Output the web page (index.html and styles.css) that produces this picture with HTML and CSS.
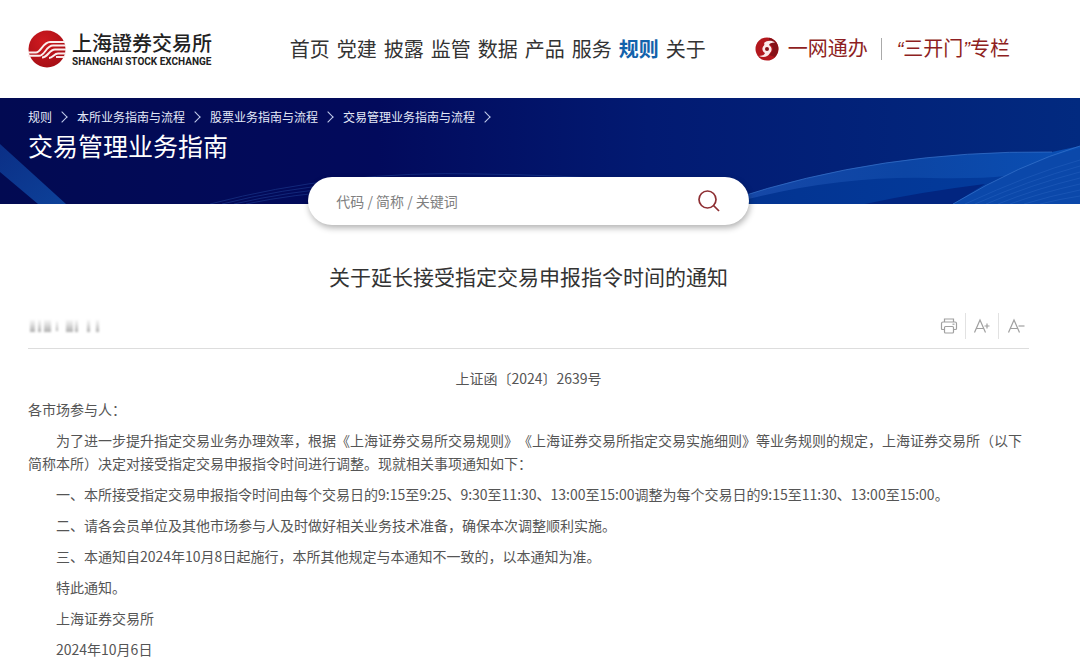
FILE: index.html
```html
<!DOCTYPE html>
<html lang="zh-CN">
<head>
  <meta charset="UTF-8">
  <meta name="viewport" content="width=device-width, initial-scale=1">
  <title>关于延长接受指定交易申报指令时间的通知</title>
  <link rel="stylesheet" href="styles.css">
</head>
<body>
  <!-- Header: logo, main nav, portal links -->
  <header class="site-header">
    <a class="logo" href="#">
      <svg class="logo-mark" viewBox="0 0 38 38" aria-hidden="true">
        <defs>
          <radialGradient id="logoRed" cx="0.4" cy="0.3" r="0.8">
            <stop offset="0" stop-color="#cf1a20"/>
            <stop offset="1" stop-color="#a30d14"/>
          </radialGradient>
        </defs>
        <circle cx="19" cy="19" r="18.5" fill="url(#logoRed)"/>
        <g fill="none" stroke="#fbeeee" stroke-width="1.9">
          <path d="M0 22.500 H8 C13 22.500 15 12 22 12 H37"/>
          <path d="M0 25.800 H11 C17 25.800 18 15.500 25 15.500 H38"/>
          <path d="M14 27.500 C20 27.500 21 19.500 27 19.500 H38"/>
          <path d="M21 28 C25 28 26 23.500 30 23.500 H38"/>
          <path d="M28 27 H37"/>
        </g>
      </svg>
      <span class="logo-text">
        <span class="logo-cn" lang="zh-TW">上海證券交易所</span>
        <span class="logo-en">SHANGHAI STOCK EXCHANGE</span>
      </span>
    </a>

    <nav class="main-nav">
      <a href="#">首页</a>
      <a href="#">党建</a>
      <a href="#">披露</a>
      <a href="#">监管</a>
      <a href="#">数据</a>
      <a href="#">产品</a>
      <a href="#">服务</a>
      <a href="#" class="active">规则</a>
      <a href="#">关于</a>
    </nav>

    <div class="portal">
      <a class="portal-link" href="#">
        <svg class="portal-icon" viewBox="0 0 24 24" aria-hidden="true">
          <circle cx="12" cy="12" r="11.500" fill="#b3171d"/>
          <path d="M14 .7 A11.500 11.500 0 0 1 20 20 L14 18 C19 14 19 9 14 7 Z" fill="#861117"/>
          <path d="M9 6 C12 3 17 3 20 5.500 C16 5.500 14.500 6.500 14 8 C17 10 17.500 13 15 16 C13 19.500 9 21.500 4 19 C8 19 9.500 17.500 10 16 C7 14 6.500 11 9 8.500 C9.500 7.500 9.500 7 9 6 Z" fill="#fbeaea"/>
          <circle cx="12" cy="12" r="2" fill="#861117"/>
        </svg>
        <span>一网通办</span>
      </a>
      <a class="portal-link portal-column" href="#"><span><i>“</i>三开门<i>”</i>专栏</span></a>
    </div>
  </header>

  <!-- Banner -->
  <section class="banner">
    <svg class="banner-art" viewBox="0 0 1080 106" preserveAspectRatio="none" aria-hidden="true">
      <defs>
        <linearGradient id="wave" x1="0" y1="0" x2="1" y2="0">
          <stop offset="0" stop-color="#1748a8"/>
          <stop offset="0.5" stop-color="#0c45a4"/>
          <stop offset="1" stop-color="#0a4fb4"/>
        </linearGradient>
        <linearGradient id="waveInner" x1="0" y1="0" x2="1" y2="0">
          <stop offset="0" stop-color="#033390"/>
          <stop offset="1" stop-color="#033b9c"/>
        </linearGradient>
        <linearGradient id="beam" x1="0" y1="0" x2="1" y2="1">
          <stop offset="0" stop-color="#0b2f86"/>
          <stop offset="1" stop-color="#0d4199"/>
        </linearGradient>
      </defs>
      <path d="M0 46 L66 106 H38 L0 74 Z" fill="url(#beam)"/>
      <g fill="none" stroke="#2950a6" stroke-width="0.6" opacity="0.7">
        <path d="M210 106 Q340 72 480 76 Q560 77 620 82"/>
        <path d="M222 106 Q340 76 480 83"/>
        <path d="M234 106 Q340 81 480 87"/>
        <path d="M246 106 Q340 86 480 91"/>
      </g>
      <path d="M730 102 Q880 52 1052 54 L1080 48 V106 H730 Z" fill="url(#wave)"/>
      <path d="M730 106 Q830 78 930 80 Q980 81 1005 78 L960 106 Z" fill="url(#waveInner)"/>
      <path d="M865 106 Q920 94 985 86 L953 106 Z" fill="#022580"/>
      <path d="M953 106 Q1020 66 1080 50 V106 Z" fill="#0b48aa"/>
      <g fill="none" stroke="#3a74cc" stroke-width="0.7">
        <path d="M730 102 Q880 52 1052 54"/>
        <path d="M953 106 Q1020 66 1080 48"/>
      </g>
      <g fill="none" stroke="#2f68c4" stroke-width="0.5" opacity="0.8">
        <path d="M965 106 Q1030 76 1080 62"/>
        <path d="M975 106 Q1030 82 1080 68"/>
        <path d="M986 106 Q1030 87 1080 74"/>
        <path d="M998 106 Q1035 91 1080 80"/>
        <path d="M1010 106 Q1040 95 1080 86"/>
        <path d="M1024 106 Q1050 98 1080 92"/>
        <path d="M1040 106 Q1060 101 1080 98"/>
      </g>
    </svg>
    <div class="banner-content">
      <nav class="breadcrumb">
        <a href="#">规则</a>
        <a href="#">本所业务指南与流程</a>
        <a href="#">股票业务指南与流程</a>
        <a href="#">交易管理业务指南与流程</a>
      </nav>
      <h1>交易管理业务指南</h1>
    </div>
  </section>

  <main class="content">
    <form class="search" role="search">
      <input type="text" class="search-input" placeholder="代码 / 简称 / 关键词" aria-label="代码 / 简称 / 关键词">
      <button type="button" class="search-btn" aria-label="搜索">
        <svg viewBox="0 0 24 24" aria-hidden="true">
          <g fill="none" stroke="#8e2f33" stroke-width="1.700">
            <circle cx="10.500" cy="10.500" r="8.500"/>
            <path d="M16.500 16.500 L22 22"/>
          </g>
        </svg>
      </button>
    </form>

    <article>
      <h2>关于延长接受指定交易申报指令时间的通知</h2>

      <div class="meta">
        <!-- date is masked -->
        <svg class="masked-date" viewBox="0 0 76 18" aria-hidden="true">
          <defs>
            <linearGradient id="mask" x1="0" y1="0" x2="0" y2="1">
              <stop offset="0" stop-color="#aaa" stop-opacity="0.1"/>
              <stop offset="1" stop-color="#999" stop-opacity="0.8"/>
            </linearGradient>
            <filter id="soft"><feGaussianBlur stdDeviation="0.9"/></filter>
          </defs>
          <g fill="url(#mask)" filter="url(#soft)">
            <rect x="2" y="3" width="5" height="12"/>
            <rect x="10" y="3" width="3" height="12"/>
            <rect x="16" y="3" width="7" height="12"/>
            <rect x="28" y="4" width="2" height="10"/>
            <rect x="38" y="3" width="7" height="12"/>
            <rect x="47" y="3" width="3" height="12"/>
            <rect x="59" y="3" width="3" height="12"/>
            <rect x="68" y="3" width="3" height="12"/>
          </g>
        </svg>
        <div class="tools">
          <button type="button" aria-label="打印">
            <svg viewBox="0 0 18 18" aria-hidden="true">
              <g fill="none" stroke="#a0a0a0" stroke-width="1.200">
                <path d="M4.500 5 V2 H13.500 V5"/>
                <path d="M4 12.500 H2.500 Q1.500 12.500 1.500 11.500 V6.500 Q1.500 5 3 5 H15 Q16.500 5 16.500 6.500 V11.500 Q16.500 12.500 15.500 12.500 H14"/>
                <rect x="4.500" y="9.500" width="9" height="6.500" rx="1"/>
                <path d="M12.500 7.200 H14.500"/>
              </g>
            </svg>
          </button>
          <button type="button" aria-label="放大字体">
            <svg viewBox="0 0 18 18" aria-hidden="true">
              <g fill="none" stroke="#a0a0a0" stroke-width="1.200">
                <path d="M1.500 15.500 L7 3 L12.500 15.500 M3.500 11.500 H10.800"/>
                <path d="M11.500 9 H16.500 M14 6.500 V11.500"/>
              </g>
            </svg>
          </button>
          <button type="button" aria-label="缩小字体">
            <svg viewBox="0 0 18 18" aria-hidden="true">
              <g fill="none" stroke="#a0a0a0" stroke-width="1.200">
                <path d="M1.500 15.500 L7 3 L12.500 15.500 M3.500 11.500 H10.800"/>
                <path d="M11.500 9 H17.500"/>
              </g>
            </svg>
          </button>
        </div>
      </div>

      <div class="article-body">
        <p class="doc-no">上证函〔2024〕2639号</p>
        <p class="flush">各市场参与人：</p>
        <p>为了进一步提升指定交易业务办理效率，根据《上海证券交易所交易规则》《上海证券交易所指定交易实施细则》等业务规则的规定，上海证券交易所（以下简称本所）决定对接受指定交易申报指令时间进行调整。现就相关事项通知如下：</p>
        <p>一、本所接受指定交易申报指令时间由每个交易日的9:15至9:25、9:30至11:30、13:00至15:00调整为每个交易日的9:15至11:30、13:00至15:00。</p>
        <p>二、请各会员单位及其他市场参与人及时做好相关业务技术准备，确保本次调整顺利实施。</p>
        <p>三、本通知自2024年10月8日起施行，本所其他规定与本通知不一致的，以本通知为准。</p>
        <p>特此通知。</p>
        <p>上海证券交易所</p>
        <p>2024年10月6日</p>
      </div>
    </article>
  </main>
</body>
</html>
```

FILE: styles.css
```css
* {
  box-sizing: border-box;
}
body {
  margin: 0;
  background: #fff;
  color: #555;
  font-family: "Noto Sans CJK SC", "Microsoft YaHei", sans-serif;
  font-size: 14px;
  line-height: 23px;
  text-spacing-trim: space-all;
}
a {
  color: inherit;
  text-decoration: none;
}
button {
  padding: 0;
  border: none;
  background: none;
  cursor: pointer;
}

/* Header */
.site-header {
  display: flex;
  align-items: center;
  justify-content: space-between;
  height: 98px;
  padding: 0 70px 0 28px;
}
.logo {
  display: flex;
  align-items: center;
  gap: 6px;
}
.logo-mark {
  width: 38px;
  height: 38px;
}
.logo-text {
  display: flex;
  flex-direction: column;
  padding-top: 3px;
  color: #222;
  font-family: Roboto, "Noto Sans CJK TC", sans-serif;
}
.logo-cn {
  font-size: 20px;
  font-weight: 500;
  line-height: 23px;
}
.logo-en {
  font-size: 10px;
  font-weight: 700;
  line-height: 12px;
}
.main-nav {
  display: flex;
  gap: 7px;
  margin-left: 29px;
  color: #333;
  font-size: 20px;
  line-height: 30px;
}
.main-nav .active {
  color: #1262ab;
  font-weight: 700;
}
.portal {
  display: flex;
  align-items: center;
  color: #8e1f22;
  font-family: "Liberation Sans", "Noto Sans CJK SC", sans-serif;
  font-size: 20px;
  line-height: 22px;
}
.portal-link {
  display: flex;
  align-items: center;
  gap: 9px;
}
.portal-icon {
  width: 24px;
  height: 24px;
}
.portal-column {
  margin-left: 13px;
  padding-left: 15px;
  border-left: 1px solid #aaa;
}

/* Banner */
.banner {
  position: relative;
  height: 106px;
  background: linear-gradient(to right, #020a52, #020a5c 35%, #021a72 60%, #022a80);
  color: #fff;
}
.banner-art {
  position: absolute;
  inset: 0;
  width: 100%;
  height: 100%;
}
.banner-content {
  position: relative;
  padding: 8px 28px 0;
}
.breadcrumb {
  display: flex;
  font-size: 12px;
  line-height: 22px;
  color: #e4e9f8;
}
.breadcrumb a {
  display: flex;
  align-items: center;
}
.breadcrumb a::after {
  content: "";
  width: 7px;
  height: 7px;
  margin: 0 11px 0 6px;
  border-top: 1px solid #c3cdec;
  border-right: 1px solid #c3cdec;
  transform: rotate(45deg);
}
.banner h1 {
  margin: 0;
  font-size: 25px;
  font-weight: 400;
  line-height: 34px;
}

/* Content */
.content {
  padding: 0 51px 8px 28px;
}
.search {
  position: relative;
  display: flex;
  align-items: center;
  width: 44%;
  min-width: 280px;
  height: 48px;
  margin: -27px auto 0;
  padding: 0 28px;
  border-radius: 24px;
  background: #fff;
  box-shadow: 1px 3px 6px rgba(0, 0, 0, 0.3);
}
.search-input {
  flex: 1;
  min-width: 0;
  padding: 0;
  border: none;
  outline: none;
  background: none;
  color: #555;
  font-family: inherit;
  font-size: 14px;
}
.search-input::placeholder {
  color: #808080;
}
.search-btn,
.search-btn svg {
  display: block;
  width: 24px;
  height: 24px;
}
h2 {
  margin: 36px 0 0;
  color: #333;
  font-size: 21px;
  font-weight: 400;
  line-height: 30px;
  text-align: center;
}
.meta {
  display: flex;
  align-items: center;
  justify-content: space-between;
  margin-top: 13px;
  height: 45px;
  border-bottom: 1px solid #ddd;
}
.masked-date {
  width: 76px;
  height: 18px;
}
.tools {
  display: flex;
  align-items: center;
}
.tools button {
  height: 26px;
  padding: 0 7px;
}
.tools button + button {
  border-left: 1px solid #e2e2e2;
}
.tools button:last-child {
  padding: 0 4px 0 8px;
}
.tools svg {
  display: block;
  width: 18px;
  height: 18px;
}

/* Article text */
.article-body {
  padding-top: 18px;
}
.article-body p {
  margin: 0 0 8px;
  text-indent: 2em;
}
.article-body .doc-no {
  text-indent: 0;
  text-align: center;
}
.article-body .flush {
  text-indent: 0;
}
```
